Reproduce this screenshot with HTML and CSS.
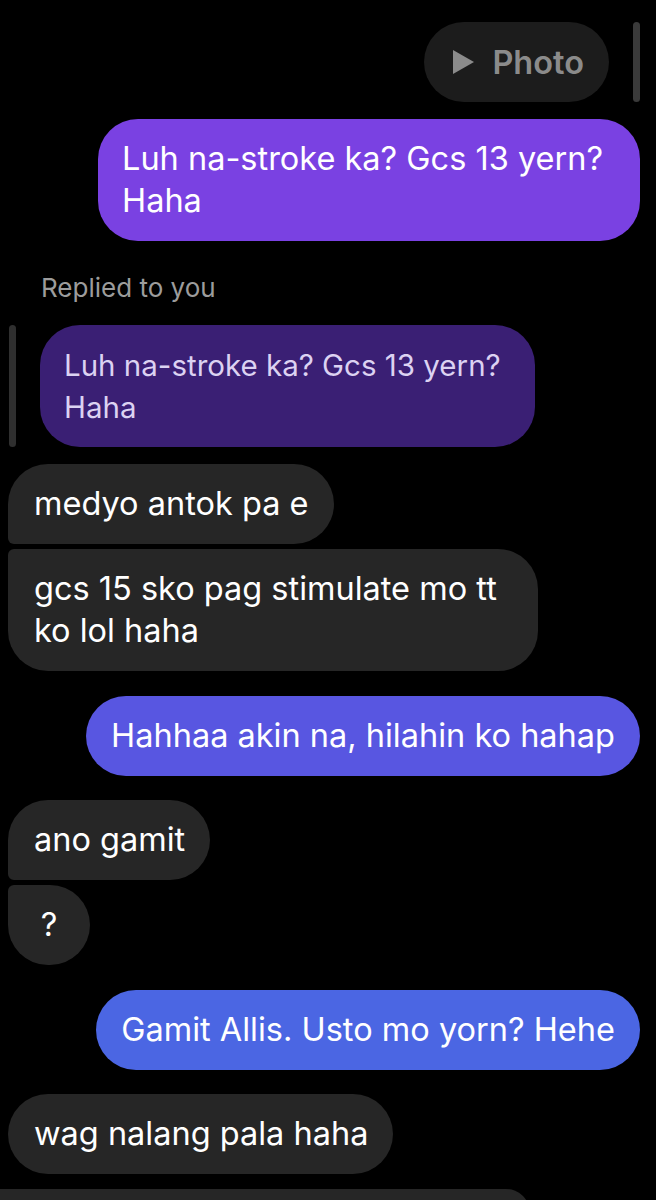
FILE: index.html
```html
<!DOCTYPE html>
<html lang="tl">
  <head>
    <meta charset="UTF-8" />
    <meta name="viewport" content="width=device-width, initial-scale=1.0" />
    <title>Chat</title>
    <link rel="stylesheet" href="styles.css">
  </head>
  <body>
    <div class="chat">
      <div class="row row-photo">
        <div class="photo">
          <svg class="play" width="21" height="24" viewBox="0 0 21 24">
            <polygon points="0,0 21,12 0,24" fill="#8b8b8b" />
          </svg>
          <span>Photo</span>
        </div>
        <div class="quote-bar"></div>
      </div>

      <div class="bubble sent purple">Luh na-stroke ka? Gcs 13 yern? Haha</div>

      <div class="replied">Replied to you</div>
      <div class="row row-reply">
        <div class="quote-bar"></div>
        <div class="bubble quoted">Luh na-stroke ka? Gcs 13 yern? Haha</div>
      </div>

      <div class="bubble recv first">medyo antok pa e</div>
      <div class="bubble recv last">gcs 15 sko pag stimulate mo tt ko lol haha</div>

      <div class="bubble sent violet">Hahhaa akin na, hilahin ko hahap</div>

      <div class="bubble recv first">ano gamit</div>
      <div class="bubble recv last mini">?</div>

      <div class="bubble sent blue">Gamit Allis. Usto mo yorn? Hehe</div>

      <div class="bubble recv">wag nalang pala haha</div>

      <div class="bubble recv cut"></div>
    </div>
  </body>
</html>
```

FILE: styles.css
```css
html,
body {
  margin: 0;
  background-color: #000;
}
body {
  font-family: Inter, "Noto Sans", sans-serif;
  color: #fff;
  height: 1200px;
  overflow: hidden;
}
.chat {
  display: flex;
  flex-direction: column;
  align-items: flex-start;
  padding: 22px 16px 0 8px;
}
.row {
  display: flex;
  align-items: stretch;
}
.row-photo {
  align-self: flex-end;
  gap: 24px;
}
.photo {
  display: flex;
  align-items: center;
  gap: 18px;
  height: 80px;
  padding: 0 25px 0 29px;
  background-color: #1c1c1c;
  border-radius: 40px;
  color: #8b8b8b;
  font-size: 32.5px;
  font-weight: 600;
}
.quote-bar {
  width: 7px;
  border-radius: 4px;
  background-color: #2f2f2f;
}
.row-photo .quote-bar {
  background-color: #3a3a3a;
}
.bubble {
  font-size: 32.5px;
  line-height: 42px;
  padding: 19px 25px;
  border-radius: 40px;
  background-color: #262626;
  box-sizing: border-box;
}
.sent {
  align-self: flex-end;
  margin-top: 24px;
}
.purple {
  background-color: #7a41e2;
  max-width: 542px;
  margin-top: 17px;
  padding-left: 24px;
}
.violet {
  background-color: #5856e1;
  margin-top: 25px;
}
.blue {
  background-color: #4b66e3;
  margin-top: 25px;
}
.recv {
  margin-top: 24px;
  max-width: 530px;
  padding-left: 26px;
}
.recv.first {
  border-bottom-left-radius: 6px;
}
.recv.last {
  margin-top: 5px;
  border-top-left-radius: 6px;
}
.mini {
  min-width: 82px;
  text-align: center;
  padding: 19px 0;
}
.replied {
  margin: 33px 0 0 33px;
  font-size: 26px;
  line-height: 28px;
  color: #9c9c9c;
}
.row-reply {
  margin-top: 23px;
  margin-left: 1px;
  gap: 24px;
}
.quoted {
  background-color: #3a1f74;
  color: #dcd2f2;
  font-size: 29.5px;
  line-height: 42px;
  width: 495px;
  padding: 19px 24px;
}
.row-reply + .recv {
  margin-top: 17px;
}
.cut {
  margin-top: 15px;
  margin-left: -8px;
  width: 623px;
  height: 80px;
  border-radius: 0 24px 0 0;
}
```
